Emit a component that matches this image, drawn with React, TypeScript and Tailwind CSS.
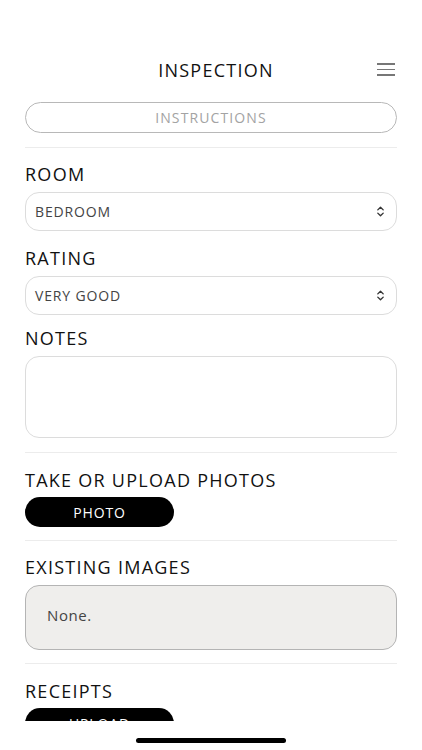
import { ChevronsUpDown } from 'lucide-react'

function Divider() {
  return <div className="h-px bg-[#ececec]" />
}

function Label({ children }: { children: React.ReactNode }) {
  return <h3 className="text-[18px] leading-[24px] font-medium text-[#111] tracking-[0.07em]">{children}</h3>
}

function SelectBox({ value }: { value: string }) {
  return (
    <div className="h-[39px] rounded-[14px] border border-[#dcdcdc] flex items-center justify-between pl-[9px] pr-[9px]">
      <span className="text-[14px] text-[#444] tracking-[0.06em]">{value}</span>
      <ChevronsUpDown className="h-[13px] w-[13px] text-[#333]" strokeWidth={2.5} />
    </div>
  )
}

export default function App() {
  return (
    <div className="w-[422px] h-[750px] bg-white flex flex-col" style={{ fontFamily: '"Open Sans", "Liberation Sans", sans-serif' }}>
      <div className="h-[721px] overflow-hidden">
        <header className="relative h-[56px] mt-[42px] flex items-center justify-center pl-[10px]">
          <h1 className="text-[18px] font-medium tracking-[0.07em] text-[#111]">INSPECTION</h1>
          <button className="absolute right-[27px] top-[21px] flex flex-col gap-[4px]" aria-label="Menu">
            <span className="block w-[18px] h-[1.5px] bg-[#777]" />
            <span className="block w-[18px] h-[1.5px] bg-[#777]" />
            <span className="block w-[18px] h-[1.5px] bg-[#777]" />
          </button>
        </header>

        <div className="px-[25px] flex flex-col">
          <button className="mt-[4px] h-[31px] rounded-full border border-[#b8b8b8] text-[14px] text-[#a3a3a3] tracking-[0.08em]">
            INSTRUCTIONS
          </button>
          <div className="mt-[14px]"><Divider /></div>

          <div className="mt-[14px]"><Label>ROOM</Label></div>
          <div className="mt-[6px]"><SelectBox value="BEDROOM" /></div>

          <div className="mt-[15px]"><Label>RATING</Label></div>
          <div className="mt-[6px]"><SelectBox value="VERY GOOD" /></div>

          <div className="mt-[11px]"><Label>NOTES</Label></div>
          <div className="mt-[6px] h-[82px] rounded-[14px] border border-[#dcdcdc]" />

          <div className="mt-[14px]"><Divider /></div>

          <div className="mt-[15px]"><Label>TAKE OR UPLOAD PHOTOS</Label></div>
          <button className="mt-[5px] w-[149px] h-[30px] rounded-full bg-black text-white text-[14px] tracking-[0.06em]">
            PHOTO
          </button>

          <div className="mt-[13px]"><Divider /></div>

          <div className="mt-[14px]"><Label>EXISTING IMAGES</Label></div>
          <div className="mt-[6px] h-[65px] rounded-[14px] border border-[#b4b4b4] bg-[#efeeec] px-[21px] pt-[17px]">
            <span className="text-[15px] leading-[20px] text-[#444] tracking-[0.04em]">None.</span>
          </div>

          <div className="mt-[13px]"><Divider /></div>

          <div className="mt-[15px]"><Label>RECEIPTS</Label></div>
          <button className="mt-[5px] w-[149px] h-[30px] rounded-full bg-black text-white text-[14px] tracking-[0.06em]">
            UPLOAD
          </button>
        </div>
      </div>
      <div className="flex-1 flex justify-center items-start pt-[17px]">
        <div className="w-[150px] h-[5px] rounded-full bg-black" />
      </div>
    </div>
  )
}
